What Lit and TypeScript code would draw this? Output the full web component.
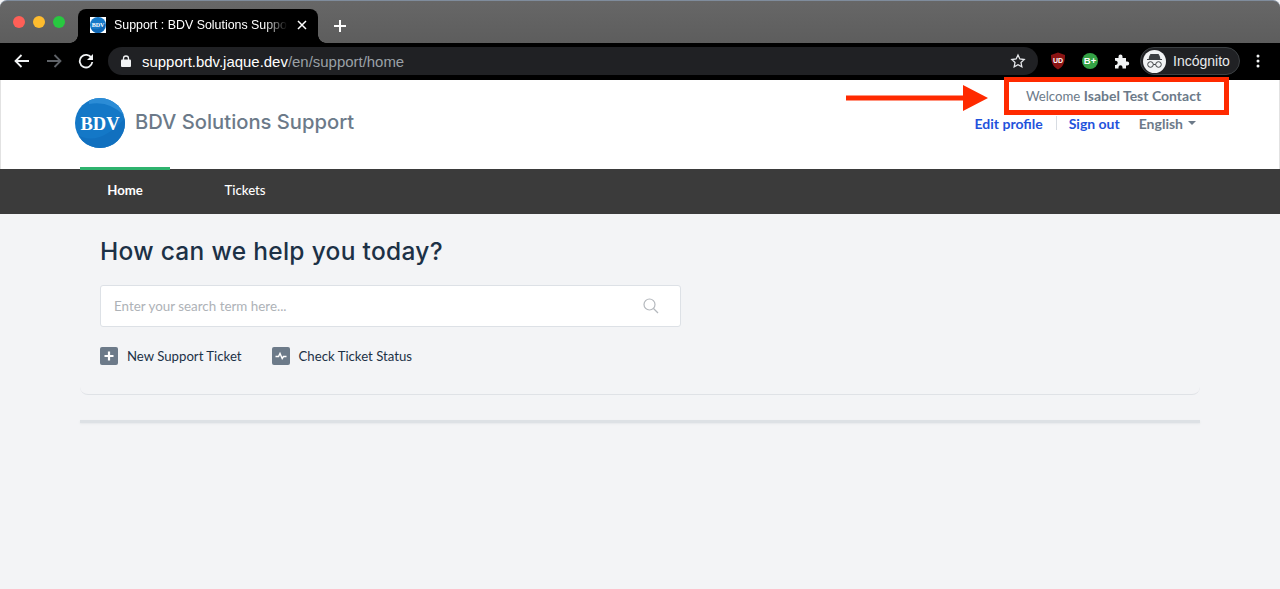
import { LitElement, html, css, svg } from "lit";
import { customElement } from "lit/decorators.js";

@customElement("app-root")
export class AppRoot extends LitElement {
  static styles = css`
    :host { display: block; position: relative; width: 1280px; height: 589px; overflow: hidden; background: #f3f4f6; font-family: "Lato", "Noto Sans", sans-serif; }
    svg { display: block; flex: none; }
    .tabbar { height: 43px; box-sizing: border-box; border-top: 1px solid #7f8c9c; background: linear-gradient(#676767, #5d5d5d); display: flex; align-items: flex-end; border-radius: 7px 7px 0 0; }
    .lights { display: flex; gap: 8px; width: 78px; padding: 0 0 15px 13px; box-sizing: border-box; }
    .light { width: 12px; height: 12px; border-radius: 50%; }
    .tab { width: 240px; height: 34px; background: #000; border-radius: 8px 8px 0 0; display: flex; align-items: center; padding: 0 0 2px 12px; box-sizing: border-box; color: #fff; font: 12.400px "Liberation Sans", sans-serif; position: relative; }
    .tab::before, .tab::after { content: ""; position: absolute; bottom: 0; width: 8px; height: 8px; }
    .tab::before { left: -8px; background: radial-gradient(circle at 0 0, transparent 7.500px, #000 8px); }
    .tab::after { right: -8px; background: radial-gradient(circle at 100% 0, transparent 7.500px, #000 8px); }
    .fav { width: 16px; height: 16px; margin-right: 8px; }
    .tabtitle { width: 175px; white-space: nowrap; -webkit-mask-image: linear-gradient(90deg, #000 86%, transparent 99%); }
    .tabx { margin-left: 8px; }
    .plus { margin: 0 0 11px 16px; }
    .toolbar { height: 37px; background: #000; display: flex; align-items: center; padding: 0 0 1px 14px; box-sizing: border-box; }
    .nav-ico { margin-right: 16px; }
    .omni { width: 930px; height: 28px; margin-left: -2px; border-radius: 14px; background: #202124; display: flex; align-items: center; padding-left: 13px; box-sizing: border-box; font: 14.950px "Liberation Sans", sans-serif; color: #9aa0a6; position: relative; }
    .lock { margin-right: 11px; }
    .host { color: #fff; }
    .star { margin-left: auto; margin-right: 12px; }
    .exts { display: flex; align-items: center; margin-left: 12px; }
    .incog { width: 100px; height: 28px; box-sizing: border-box; border: 1px solid #3c4043; border-radius: 14px; background: #202124; display: flex; align-items: center; gap: 7px; padding-left: 2px; color: #e8eaed; font: 14px "Liberation Sans", sans-serif; margin-left: 10px; white-space: nowrap; }
    .incog-ico { width: 23px; height: 23px; border-radius: 50%; background: #f1f3f4; display: flex; align-items: center; justify-content: center; }
    .dots { margin-left: 16px; }
    .header { height: 89px; background: #fff; display: flex; justify-content: space-between; padding: 18px 83px 0 74px; box-sizing: border-box; position: relative; border-left: 1px solid #e2e2e2; border-right: 1px solid #e2e2e2; }
    .brand { display: flex; align-items: flex-start; gap: 10px; }
    .brandname { font: 500 20.200px/48px "Inter", sans-serif; color: #6c7a89; }
    .account { display: flex; align-items: flex-start; padding-top: 16px; }
    .acct-links { display: flex; align-items: center; font-size: 14px; font-weight: 700; height: 18px; }
    .acct-links a { color: #1f52dc; }
    .sep { width: 1px; height: 14px; background: #d7dce2; margin: 0 12px 0 13px; }
    .lang { color: #6c7a89; margin-left: 19px; display: flex; align-items: center; gap: 5px; }
    .caret { width: 0; height: 0; border: 4px solid transparent; border-top-color: #6c7a89; border-bottom: 0; }
    .navbar { height: 45px; background: #3b3b3b; display: flex; padding-left: 80px; font-size: 13.200px; color: #fff; }
    .item { display: flex; align-items: center; justify-content: center; box-sizing: border-box; height: 45px; width: 90px; padding-bottom: 4px; }
    .item.active { font-weight: 700; position: relative; }
    .item.active::before { content: ""; position: absolute; left: 0; right: 0; top: -2px; height: 3px; background: #2fb36e; }
    .item.second { width: 150px; font-weight: 500; }
    .main { margin: 0 80px; }
    .hero { height: 181px; box-sizing: border-box; padding: 20px 20px 0; border: solid #dfe2e6; border-width: 0 0 1px; border-radius: 0 0 8px 8px; }
    h1 { margin: 0; font: 500 24.500px/34px "Inter", sans-serif; color: #1c3146; letter-spacing: .3px; }
    .search { width: 581px; height: 42px; box-sizing: border-box; margin-top: 17px; background: #fff; border: 1px solid #dde1e6; border-radius: 3px; display: flex; align-items: center; justify-content: space-between; padding: 0 21px 0 13px; font-size: 13.400px; color: #aeb2b7; }
    .actions { display: flex; margin-top: 19px; font-size: 13.200px; color: #1c3146; }
    .action { display: flex; align-items: center; gap: 9px; margin-right: 30px; height: 19px; }
    .rule { height: 3px; margin-top: 25px; background: #dde1e5; box-shadow: 0 1px 2px #e6e8eb; }
    .box { position: absolute; left: 1004px; top: 77px; width: 225px; height: 38px; box-sizing: border-box; border: 5px solid #ff2a00; display: flex; align-items: baseline; justify-content: center; font-size: 13.200px; line-height: 28px; color: #6c7a89; padding-right: 6px; }
    .box b { font-weight: 700; font-size: 14px; margin-left: 3.500px; }
    .arrow { position: absolute; left: 846px; top: 85px; }
  `;

  render() {
    return html`
      <div class="tabbar">
        <div class="lights">
          <div class="light" style="background:#ff5f57"></div>
          <div class="light" style="background:#febc2e"></div>
          <div class="light" style="background:#28c840"></div>
        </div>
        <div class="tab">
          <svg class="fav" viewBox="0 0 16 16"><rect width="16" height="16" fill="#fff"/><circle cx="8" cy="8" r="8" fill="#1579c8"/><path d="M1 11 q7 4 14 -4 v4 q-3 5 -7 5 q-5 0 -7 -5z" fill="#0f66b3"/><text x="8" y="10" font-family="Liberation Serif" font-weight="700" font-size="6" text-anchor="middle" fill="#fff">BDV</text></svg>
          <div class="tabtitle">Support : BDV Solutions Suppo</div>
          <svg class="tabx" width="10" height="10" viewBox="0 0 10 10"><path d="M1 1l8 8M9 1l-8 8" stroke="#fff" stroke-width="1.500"/></svg>
        </div>
        <svg class="plus" width="12" height="12" viewBox="0 0 12 12"><path d="M6 0v12M0 6h12" stroke="#fff" stroke-width="2"/></svg>
      </div>
      <div class="toolbar">
        <svg class="nav-ico" width="16" height="14" viewBox="0 0 16 14"><path d="M15 7H2M7.500 1 1.500 7l6 6" fill="none" stroke="#f1f3f4" stroke-width="1.800"/></svg>
        <svg class="nav-ico" width="16" height="14" viewBox="0 0 16 14"><path d="M1 7h13M8.500 1l6 6-6 6" fill="none" stroke="#5f6368" stroke-width="1.800"/></svg>
        <svg class="nav-ico" width="16" height="16" viewBox="0 0 16 16"><path d="M13.500 5A6.300 6.300 0 1 0 14.300 9" fill="none" stroke="#f1f3f4" stroke-width="1.800"/><path d="M15 1v6H9z" fill="#f1f3f4"/></svg>
        <div class="omni">
          <svg class="lock" width="10" height="12" viewBox="0 0 10 12"><path d="M2.500 5V3.500a2.500 2.500 0 0 1 5 0V5" fill="none" stroke="#f1f3f4" stroke-width="1.300"/><rect y="4.500" width="10" height="7.500" rx="1" fill="#f1f3f4"/></svg>
          <span class="host">support.bdv.jaque.dev</span>/en/support/home
          <svg class="star" width="16" height="16" viewBox="0 0 24 24"><path d="M12 3l2.800 6 6.500.8-4.800 4.500 1.300 6.500L12 17.500 6.200 20.800l1.300-6.500L2.700 9.800 9.200 9z" fill="none" stroke="#e8eaed" stroke-width="1.900"/></svg>
        </div>
        <div class="exts">
          <svg width="16" height="18" viewBox="0 0 16 18"><path d="M8 .5 15 3c0 7-1.500 11.500-7 14.500C2.500 14.500 1 10 1 3z" fill="#8b1414"/><text x="8" y="10.500" font-size="7" font-weight="700" font-family="Liberation Sans" text-anchor="middle" fill="#fff">UD</text></svg>
          <svg style="margin-left:16px" width="16" height="16" viewBox="0 0 16 16"><circle cx="8" cy="8" r="8" fill="#34a245"/><text x="8" y="11.300" font-size="9.500" font-weight="700" font-family="Liberation Sans" text-anchor="middle" fill="#fff">B+</text></svg>
          <svg style="margin-left:16px" width="16" height="16" viewBox="0 0 16 16"><path d="M1 5h3.500V3.500a2 2 0 0 1 4 0V5H12v3.500h1.200a2 2 0 0 1 0 4H12V15.500H8.500v-1.200a2 2 0 0 0-4 0v1.200H1v-3.500h1a2.200 2.200 0 0 0 0-4.300H1z" fill="#f1f3f4"/></svg>
          <div class="incog">
            <div class="incog-ico"><svg width="19" height="16" viewBox="0 0 19 16"><path d="M5.500 1.500h8l1.500 4h-11zM2 6.500h15" fill="#3c4043" stroke="#3c4043" stroke-width="1"/><circle cx="5.500" cy="11.500" r="2.800" fill="none" stroke="#3c4043" stroke-width="1"/><circle cx="13.500" cy="11.500" r="2.800" fill="none" stroke="#3c4043" stroke-width="1"/><path d="M8.300 11.500h2.400" stroke="#3c4043" stroke-width="1"/></svg></div>
            Incógnito
          </div>
          <svg class="dots" width="4" height="14" viewBox="0 0 4 14"><circle cx="2" cy="2" r="1.500" fill="#f1f3f4"/><circle cx="2" cy="7" r="1.500" fill="#f1f3f4"/><circle cx="2" cy="12" r="1.500" fill="#f1f3f4"/></svg>
        </div>
      </div>
      <header class="header">
        <div class="brand">
          ${this.logo()}
          <div class="brandname">BDV Solutions Support</div>
        </div>
        <div class="account">
          <div class="acct-links">
            <a>Edit profile</a><span class="sep"></span><a>Sign out</a>
            <span class="lang">English <span class="caret"></span></span>
          </div>
        </div>
      </header>
      <nav class="navbar">
        <div class="item active">Home</div>
        <div class="item second">Tickets</div>
      </nav>
      <main class="main">
        <section class="hero">
          <h1>How can we help you today?</h1>
          <div class="search">
            <span>Enter your search term here...</span>
            <svg width="16" height="16" viewBox="0 0 16 16"><circle cx="6.500" cy="6.500" r="5.500" fill="none" stroke="#b4b8bd" stroke-width="1.200"/><path d="M10.500 10.500 15 15" stroke="#b4b8bd" stroke-width="1.200"/></svg>
          </div>
          <div class="actions">
            <div class="action">
              <svg width="18" height="18" viewBox="0 0 18 18"><rect width="18" height="18" rx="2" fill="#6c7a89"/><path d="M9 4.500v9M4.500 9h9" stroke="#fff" stroke-width="2.200"/></svg>
              New Support Ticket
            </div>
            <div class="action">
              <svg width="18" height="18" viewBox="0 0 18 18"><rect width="18" height="18" rx="2" fill="#6c7a89"/><path d="M3.500 9.500h3L8 6.500l2.200 5 1.300-2h3" fill="none" stroke="#fff" stroke-width="1.400"/></svg>
              Check Ticket Status
            </div>
          </div>
        </section>
        <div class="rule"></div>
      </main>
      <div class="box"><span>Welcome</span><b>Isabel Test Contact</b></div>
      <svg class="arrow" width="142" height="26" viewBox="0 0 142 26"><path d="M0 10.500h117V0l25 13-25 13V15.500H0z" fill="#ff2a00"/></svg>
    `;
  }

  logo() {
    return svg`<svg width="50" height="50" viewBox="0 0 50 50">
      <defs><clipPath id="c"><circle cx="25" cy="25" r="25"/></clipPath></defs>
      <circle cx="25" cy="25" r="25" fill="#1478c7"/>
      <g clip-path="url(#c)">
        <path d="M0 36 Q24 50 50 20 V50 H0z" fill="#1170bf"/>
        <path d="M14 6 Q34 2 50 18 V0 H14z" fill="#2b8cd6"/>
      </g>
      <text x="25" y="32" font-family="Liberation Serif" font-weight="700" font-size="18.500" text-anchor="middle" fill="#fff">BDV</text>
    </svg>`;
  }
}
